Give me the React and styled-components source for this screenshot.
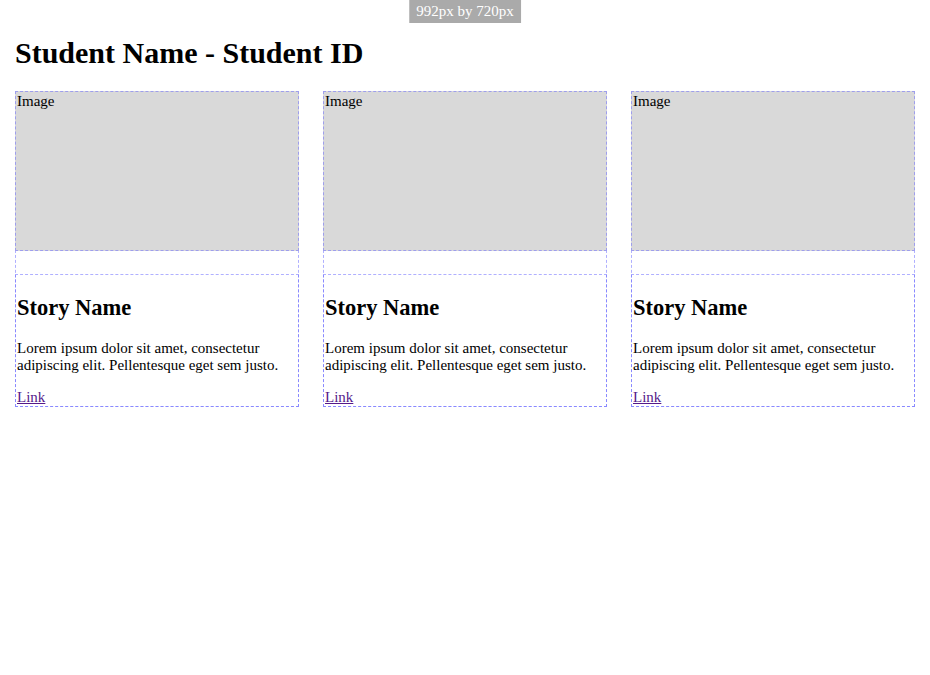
import React from "react";
import styled, { createGlobalStyle } from "styled-components";

const Global = createGlobalStyle`
  html, body { margin: 0; padding: 0; background: #fff; }
  *, *::before, *::after { box-sizing: border-box; }
  body { font-family: "Liberation Serif", "Times New Roman", serif; font-size: 15px; color: #000; }
`;

const dash = "1px dashed rgba(100, 100, 255, 0.5)";

const SizeBadge = styled.div`
  position: fixed;
  top: 0;
  left: 50%;
  transform: translateX(-50%);
  background: #aaaaaa;
  color: #fff;
  font-size: 15px;
  padding: 0 7px;
  line-height: 23px;
  white-space: nowrap;
`;

const Page = styled.main`
  padding: 36px 15px 0;
`;

const Title = styled.h1`
  font-size: 30px;
  font-weight: bold;
  margin: 0 0 21px;
`;

const Grid = styled.div`
  display: grid;
  grid-template-columns: repeat(3, 1fr);
  gap: 24px;
`;

const Card = styled.article`
  border: ${dash};
`;

const ImageBox = styled.div`
  margin: -1px -1px 0;
  aspect-ratio: 16 / 9;
  background: #d9d9d9;
  border: ${dash};
  padding: 1px 1px 0;
`;

const Body = styled.div`
  margin: 23px -1px -1px;
  border: ${dash};
  padding: 0 1px;
  display: flow-root;
`;

const StoryName = styled.h2`
  font-size: 22.5px;
  font-weight: bold;
  margin: 20.7px 0 18.7px;
`;

const Text = styled.p`
  margin: 15px 0;
`;

const StoryLink = styled.a`
  color: #551a8b;
  text-decoration: underline;
`;

const stories = [1, 2, 3];

export default function App() {
  return (
    <>
      <Global />
      <SizeBadge>992px by 720px</SizeBadge>
      <Page>
        <Title>Student Name - Student ID</Title>
        <Grid>
          {stories.map((s) => (
            <Card key={s}>
              <ImageBox>Image</ImageBox>
              <Body>
                <StoryName>Story Name</StoryName>
                <Text>
                  Lorem ipsum dolor sit amet, consectetur adipiscing elit.
                  Pellentesque eget sem justo.
                </Text>
                <StoryLink href="#">Link</StoryLink>
              </Body>
            </Card>
          ))}
        </Grid>
      </Page>
    </>
  );
}
